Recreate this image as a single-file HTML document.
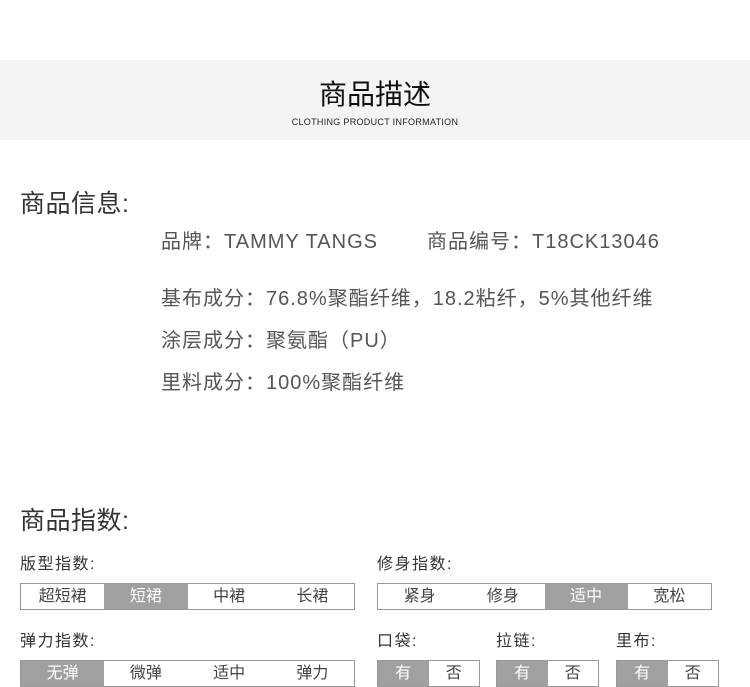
<!DOCTYPE html><html><head><meta charset="utf-8"><style>
body{margin:0;width:750px;height:687px;background:#fff;position:relative;overflow:hidden;font-family:"Liberation Sans","Noto Sans CJK SC",sans-serif;color:#333}
.a{position:absolute;white-space:nowrap}
.band{position:absolute;left:0;top:60px;width:750px;height:80px;background:#f4f4f4}
.h{font-size:25px;color:#333;letter-spacing:0.5px}
.t{font-size:20px;color:#555;letter-spacing:1px}
.l{font-size:16px;color:#333;letter-spacing:1.5px}
.box{position:absolute;display:flex;border:1px solid #999;box-sizing:border-box;height:27px}
.box div{flex:1;text-align:center;line-height:25px;font-size:16px;color:#444}
.box div.on{background:#a0a0a0;color:#fff}
</style></head><body>
<div class="band"></div>
<div class="a" style="left:0;width:750px;text-align:center;top:73px;font-size:28px;color:#111">商品描述</div>
<div class="a" style="left:0;width:750px;text-align:center;top:117px;font-size:9px;color:#222;letter-spacing:0.3px">CLOTHING PRODUCT INFORMATION</div>
<div class="a h" style="left:20px;top:184px">商品信息:</div>
<div class="a t" style="left:161px;top:225px">品牌：TAMMY TANGS</div>
<div class="a t" style="left:427px;top:225px">商品编号：T18CK13046</div>
<div class="a t" style="left:161px;top:282px">基布成分：76.8%聚酯纤维，18.2粘纤，5%其他纤维</div>
<div class="a t" style="left:161px;top:324px">涂层成分：聚氨酯（PU）</div>
<div class="a t" style="left:161px;top:366px">里料成分：100%聚酯纤维</div>
<div class="a h" style="left:20px;top:501px">商品指数:</div>
<div class="a l" style="left:20px;top:550px">版型指数:</div>
<div class="a l" style="left:377px;top:550px">修身指数:</div>
<div class="box" style="left:20px;top:583px;width:335px"><div>超短裙</div><div class="on">短裙</div><div>中裙</div><div>长裙</div></div>
<div class="box" style="left:377px;top:583px;width:335px"><div>紧身</div><div>修身</div><div class="on">适中</div><div>宽松</div></div>
<div class="a l" style="left:20px;top:627px">弹力指数:</div>
<div class="a l" style="left:377px;top:627px">口袋:</div>
<div class="a l" style="left:496px;top:627px">拉链:</div>
<div class="a l" style="left:616px;top:627px">里布:</div>
<div class="box" style="left:20px;top:660px;width:335px"><div class="on">无弹</div><div>微弹</div><div>适中</div><div>弹力</div></div>
<div class="box" style="left:377px;top:660px;width:103px"><div class="on">有</div><div>否</div></div>
<div class="box" style="left:496px;top:660px;width:103px"><div class="on">有</div><div>否</div></div>
<div class="box" style="left:616px;top:660px;width:103px"><div class="on">有</div><div>否</div></div>
</body></html>
